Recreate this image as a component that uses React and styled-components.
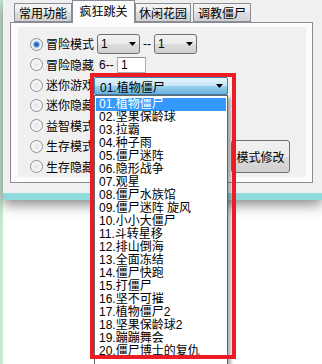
import React from "react";
import styled, { createGlobalStyle } from "styled-components";

const GlobalStyle = createGlobalStyle`
  html, body { margin: 0; padding: 0; background: #ffffff; }
  body {
    font-family: "Liberation Sans", "Noto Sans CJK SC", sans-serif;
    font-size: 12px;
    color: #000;
  }
`;

const Screen = styled.div`
  position: relative;
  width: 322px;
  height: 364px;
  overflow: hidden;
  display: flex;
  background: #ffffff;
`;

const Desktop = styled.div`
  flex: none;
  width: 3px;
  background: #c8e8d2;
`;

const Main = styled.div`
  flex: 1;
  display: flex;
  flex-direction: column;
`;

const Window = styled.div`
  flex: none;
  height: 193px;
  background: #f0f0f0;
  border-bottom: 7px solid #8fdadd;
  box-shadow: 0 5px 12px rgba(0, 0, 0, 0.45);
  padding-left: 7px;
`;

const TabStrip = styled.div`
  display: flex;
  align-items: flex-end;
  height: 22px;
  padding-left: 4px;
  position: relative;
  z-index: 1;
`;

const Tab = styled.div`
  box-sizing: border-box;
  width: ${(p) => p.$w}px;
  margin-right: ${(p) => p.$gap || 0}px;
  height: ${(p) => (p.$active ? 23 : 19)}px;
  margin-bottom: ${(p) => (p.$active ? -1 : 0)}px;
  border: 1px solid #898c95;
  border-bottom: ${(p) => (p.$active ? "none" : "1px solid #898c95")};
  background: ${(p) =>
    p.$active
      ? "#fcfcfc"
      : "linear-gradient(#f4f4f4, #ececec 50%, #dedede 50%, #d2d2d2)"};
  display: flex;
  align-items: ${(p) => (p.$active ? "flex-start" : "center")};
  padding-top: ${(p) => (p.$active ? 3 : 0)}px;
  justify-content: center;
  font-family: "Noto Sans CJK SC", sans-serif;
  font-size: 12px;
  line-height: 14px;
`;

const TabBody = styled.div`
  box-sizing: border-box;
  width: 303px;
  height: 161px;
  border: 1px solid #898c95;
  background: #fcfcfc;
  padding: 4px 6px 5px 7px;
`;

const Panel = styled.div`
  height: 150px;
  background: #f0f0f0;
  display: flex;
`;

const Options = styled.div`
  width: 213px;
  padding-top: 7px;
  display: flex;
  flex-direction: column;
`;

const Row = styled.div`
  height: 21px;
  display: flex;
  align-items: center;
  padding-left: 12px;
`;

const Radio = styled.span`
  box-sizing: border-box;
  flex: none;
  width: 13px;
  height: 13px;
  border-radius: 50%;
  border: 1px solid #8e8f8f;
  background: ${(p) =>
    p.$checked
      ? "radial-gradient(circle, #1c4f96 0, #3a7ad0 2px, #9cc3ee 3px, #e6eef8 4px, #f4f4f4 6px)"
      : "radial-gradient(circle, #e4e4e4 0, #f0f0f0 3px, #fafafa 6px)"};
  box-shadow: inset 0 0 1px #ffffff;
  margin-right: 3px;
`;

const Label = styled.span`
  font-family: "Noto Sans CJK SC", sans-serif;
  font-size: 12px;
  line-height: 14px;
  white-space: nowrap;
  margin-right: ${(p) => p.$mr || 0}px;
`;

const Combo = styled.div`
  box-sizing: border-box;
  width: 43px;
  height: 20px;
  border: 1px solid #707070;
  border-radius: 3px;
  background: linear-gradient(#f2f2f2, #ebebeb 50%, #dddddd 50%, #cfcfcf);
  display: flex;
  align-items: center;
  justify-content: space-between;
  padding: 0 3px 0 3px;
  font-size: 12px;
`;

const Arrow = () => (
  <svg width="7" height="4" viewBox="0 0 7 4">
    <path d="M0 0H7L3.5 4Z" fill="#000" />
  </svg>
);

const Dash = styled.span`
  width: 14px;
  text-align: center;
  font-size: 12px;
`;

const Prefix = styled.span`
  margin-left: 5px;
  font-size: 12px;
  width: 18px;
`;

const TextBox = styled.div`
  box-sizing: border-box;
  width: 29px;
  height: 16px;
  border: 1px solid #abadb3;
  border-top-color: #8e8f8f;
  background: #fff;
  padding-left: 3px;
  font-size: 12px;
  line-height: 14px;
`;

const Side = styled.div`
  padding-top: 113px;
`;

const Button = styled.div`
  box-sizing: border-box;
  width: 59px;
  height: 33px;
  border: 1px solid #707070;
  border-radius: 3px;
  background: linear-gradient(#f2f2f2, #ebebeb 50%, #dddddd 50%, #cfcfcf);
  display: flex;
  align-items: center;
  justify-content: center;
  font-family: "Noto Sans CJK SC", sans-serif;
  font-size: 12px;
`;

const Dropdown = styled.div`
  position: absolute;
  left: 94px;
  top: 77px;
  width: 134px;
  z-index: 5;
`;

const OpenCombo = styled.div`
  box-sizing: border-box;
  height: 18px;
  border: 1px solid #3c7fb1;
  border-radius: 2px;
  background: linear-gradient(#e5f4fc, #c4e5f6 50%, #98d1ef 50%, #68b3db);
  display: flex;
  align-items: center;
  justify-content: space-between;
  padding: 0 4px 0 5px;
  font-family: "Liberation Sans", "Noto Sans CJK SC", sans-serif;
  font-size: 12px;
`;

const List = styled.div`
  box-sizing: border-box;
  height: 270px;
  background: #fff;
  border: 1px solid #646464;
  padding: 2px 1px;
  box-shadow: 3px 3px 3px rgba(0, 0, 0, 0.3);
`;

const Item = styled.div`
  height: 13px;
  line-height: 13px;
  padding-left: 3px;
  white-space: nowrap;
  font-family: "Liberation Sans", "Noto Sans CJK SC", sans-serif;
  font-size: 12px;
  background: ${(p) => (p.$selected ? "#3399ff" : "transparent")};
  color: ${(p) => (p.$selected ? "#fff" : "#000")};
`;

const Highlight = styled.div`
  position: absolute;
  left: 90px;
  top: 73px;
  width: 146px;
  height: 286px;
  box-sizing: border-box;
  border: 4px solid #ec1c24;
  z-index: 6;
  pointer-events: none;
`;

const levels = [
  "01.植物僵尸",
  "02.坚果保龄球",
  "03.拉霸",
  "04.种子雨",
  "05.僵尸迷阵",
  "06.隐形战争",
  "07.观星",
  "08.僵尸水族馆",
  "09.僵尸迷阵 旋风",
  "10.小小大僵尸",
  "11.斗转星移",
  "12.排山倒海",
  "13.全面冻结",
  "14.僵尸快跑",
  "15.打僵尸",
  "16.坚不可摧",
  "17.植物僵尸2",
  "18.坚果保龄球2",
  "19.蹦蹦舞会",
  "20.僵尸博士的复仇",
];

const modes = ["迷你游戏", "迷你隐藏", "益智模式", "生存模式", "生存隐藏"];

export default function App() {
  return (
    <>
      <GlobalStyle />
      <Screen>
        <Desktop />
        <Main>
          <Window>
            <TabStrip>
              <Tab $w={58}>常用功能</Tab>
              <Tab $w={63} $active>疯狂跳关</Tab>
              <Tab $w={56} $gap={2}>休闲花园</Tab>
              <Tab $w={58}>调教僵尸</Tab>
            </TabStrip>
            <TabBody>
              <Panel>
                <Options>
                  <Row>
                    <Radio $checked />
                    <Label $mr={3}>冒险模式</Label>
                    <Combo>
                      <span>1</span>
                      <Arrow />
                    </Combo>
                    <Dash>--</Dash>
                    <Combo>
                      <span>1</span>
                      <Arrow />
                    </Combo>
                  </Row>
                  <Row>
                    <Radio />
                    <Label>冒险隐藏</Label>
                    <Prefix>6--</Prefix>
                    <TextBox>1</TextBox>
                  </Row>
                  {modes.map((m) => (
                    <Row key={m}>
                      <Radio />
                      <Label>{m}</Label>
                    </Row>
                  ))}
                </Options>
                <Side>
                  <Button>模式修改</Button>
                </Side>
              </Panel>
            </TabBody>
          </Window>
        </Main>
        <Dropdown>
          <OpenCombo>
            <span>01.植物僵尸</span>
            <Arrow />
          </OpenCombo>
          <List>
            {levels.map((l, i) => (
              <Item key={l} $selected={i === 0}>
                {l}
              </Item>
            ))}
          </List>
        </Dropdown>
        <Highlight />
      </Screen>
    </>
  );
}
